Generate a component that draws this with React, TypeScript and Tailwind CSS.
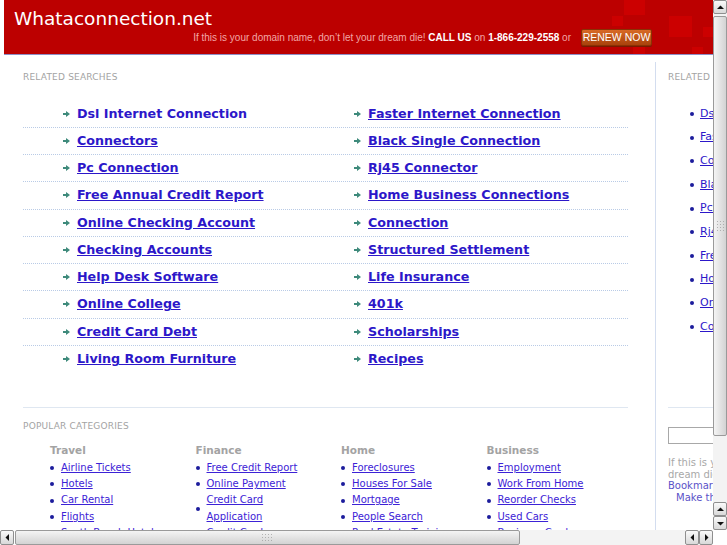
import React from "react";

const related: [string, string][] = [
  ["Dsl Internet Connection", "Faster Internet Connection"],
  ["Connectors", "Black Single Connection"],
  ["Pc Connection", "Rj45 Connector"],
  ["Free Annual Credit Report", "Home Business Connections"],
  ["Online Checking Account", "Connection"],
  ["Checking Accounts", "Structured Settlement"],
  ["Help Desk Software", "Life Insurance"],
  ["Online College", "401k"],
  ["Credit Card Debt", "Scholarships"],
  ["Living Room Furniture", "Recipes"],
];

const sideLinks = [
  "Dsl Internet Connection",
  "Faster Internet Connection",
  "Connectors",
  "Black Single Connection",
  "Pc Connection",
  "Rj45 Connector",
  "Free Annual Credit Report",
  "Home Business Connections",
  "Online Checking Account",
  "Connection",
];

const categories = [
  { title: "Travel", items: ["Airline Tickets", "Hotels", "Car Rental", "Flights", "South Beach Hotels"] },
  { title: "Finance", items: ["Free Credit Report", "Online Payment", "Credit Card Application", "Credit Cards"] },
  { title: "Home", items: ["Foreclosures", "Houses For Sale", "Mortgage", "People Search", "Real Estate Training"] },
  { title: "Business", items: ["Employment", "Work From Home", "Reorder Checks", "Used Cars", "Business Cards"] },
];

const Arrow = () => (
  <svg width="7" height="6" viewBox="0 0 7 6" className="shrink-0">
    <path d="M0 2h3V0l4 3-4 3V4H0z" fill="#3e8a7b" />
  </svg>
);

const Dot = () => <span className="w-[4px] h-[4px] rounded-full bg-[#1c1c9c] shrink-0" />;

const Grip = ({ vertical }: { vertical?: boolean }) => (
  <svg width={vertical ? 9 : 13} height={vertical ? 13 : 9} className="opacity-70">
    {Array.from({ length: 12 }).map((_, i) => {
      const a = i % 3;
      const b = Math.floor(i / 3);
      return vertical ? (
        <rect key={i} x={a * 3 + 1} y={b * 3 + 1} width="1" height="1" fill="#9a9a9a" />
      ) : (
        <rect key={i} x={b * 3 + 1} y={a * 3 + 1} width="1" height="1" fill="#9a9a9a" />
      );
    })}
  </svg>
);

const Btn = ({ dir }: { dir: "up" | "down" | "left" | "right" }) => {
  const d = {
    up: "M1 5h7L4.5 1.5z",
    down: "M1 2h7L4.5 5.5z",
    left: "M5 1v7L1.5 4.5z",
    right: "M2 1v7l3.5-3.5z",
  }[dir];
  const vert = dir === "up" || dir === "down";
  return (
    <div
      className={`flex items-center justify-center border border-[#8f8f8f] rounded-[2px] bg-gradient-to-b from-[#fafafa] to-[#d9d9d9] ${
        vert ? "w-[14px] h-[14px]" : "w-[14px] h-[15px]"
      }`}
    >
      <svg width={vert ? 9 : 7} height={vert ? 7 : 9}>
        <path d={d} fill="#111" />
      </svg>
    </div>
  );
};

const Header = () => (
  <div className="relative h-[55px] bg-[#bc0000] border-b border-[#8e8ec6] overflow-hidden flex flex-col pt-[8px]">
    <svg className="absolute left-0 top-0" width="709" height="54">
      <g fill="#cc0000">
        <rect x="620" y="0" width="21" height="15" />
        <rect x="608" y="16" width="11" height="10" />
        <rect x="665" y="16" width="23" height="21" />
        <rect x="699" y="27" width="10" height="10" />
        <rect x="629" y="47" width="12" height="7" />
        <rect x="688" y="47" width="11" height="7" />
      </g>
    </svg>
    <div className="relative pl-[10px] text-white text-[18.5px] leading-[22px] font-['DejaVu_Sans',sans-serif]">
      Whataconnection.net
    </div>
    <div className="relative flex items-center justify-end h-[17px] pr-[61px] -mt-px font-['Liberation_Sans',Arial,sans-serif] text-[10px]">
      <span className="text-[#f2a6a6]">
        If this is your domain name, don’t let your dream die! <b className="text-white">CALL US</b> on{" "}
        <b className="text-white">1-866-229-2558</b> or
      </span>
      <div className="ml-[10px] w-[71px] h-[17px] flex items-center justify-center rounded-[2px] border border-[#8a3104] bg-gradient-to-b from-[#d86a26] to-[#a9420c] text-white text-[10.5px] shadow-[0_1px_0_#7a1a00]">
        RENEW NOW
      </div>
    </div>
  </div>
);

const Main = () => (
  <div className="w-[605px] ml-[19px] shrink-0 font-['DejaVu_Sans',sans-serif]">
    <div className="pt-[17px] text-[9px] leading-[11px] text-[#a3a3a3] tracking-[0.2px]">RELATED SEARCHES</div>
    <div className="mt-[17.5px]">
      {related.map((r, i) => (
        <div
          key={i}
          className={`flex items-center h-[27.25px] ${i < 9 ? "border-b border-dotted border-[#b9cbe6]" : ""}`}
        >
          {r.map((t, j) => (
            <div key={j} className={`flex items-center gap-[7px] pl-[40px] ${j === 0 ? "w-[291px]" : "flex-1"}`}>
              <Arrow />
              <a
                className={`text-[12.7px] font-bold text-[#2c17c9] leading-[16px] ${
                  i === 0 && j === 0 ? "no-underline" : "underline"
                }`}
              >
                {t}
              </a>
            </div>
          ))}
        </div>
      ))}
    </div>
    <div className="mt-[34px] border-t border-[#dfe7f1]" />
    <div className="pt-[13px] text-[9px] leading-[11px] text-[#a3a3a3] tracking-[0.2px]">POPULAR CATEGORIES</div>
    <div className="grid grid-cols-[145.5px_145.5px_145.5px_145.5px] ml-[27px] mt-[12px]">
      {categories.map((c) => (
        <div key={c.title}>
          <div className="text-[10.5px] leading-[13px] font-bold text-[#a3a3a3]">{c.title}</div>
          <div className="mt-[2.5px]">
            {c.items.map((it) => (
              <div key={it} className="flex items-center gap-[7px]">
                <Dot />
                <a className="max-w-[106px] text-[10px] leading-[16.4px] text-[#3c22d6] underline">{it}</a>
              </div>
            ))}
          </div>
        </div>
      ))}
    </div>
  </div>
);

const Sidebar = () => (
  <div className="ml-[27px] mt-[7px] border-l border-[#d3ddef] pl-[12px] w-[260px] shrink-0 font-['DejaVu_Sans',sans-serif]">
    <div className="pt-[9.5px] text-[9px] leading-[11px] text-[#a3a3a3] tracking-[0.2px]">RELATED</div>
    <div className="mt-[19.5px]">
      {sideLinks.map((t) => (
        <div key={t} className="flex items-center gap-[6px] pl-[22px] h-[23.7px]">
          <Dot />
          <a className="text-[11px] text-[#2c17c9] underline">{t}</a>
        </div>
      ))}
    </div>
    <div className="mt-[68px] border-t border-[#dfe7f1]" />
    <div className="mt-[19px] h-[17px] w-[200px] border border-[#a8a8a8]" />
    <div className="mt-[13px] text-[10px] leading-[11.7px]">
      <div className="text-[#a8a8a8]">If this is your domain name, don't let your</div>
      <div className="text-[#a8a8a8]">dream die! Renew it today.</div>
      <div className="text-[#5b52c8]">Bookmark this page</div>
      <div className="pl-[8px] text-[#5b52c8]">Make this your homepage</div>
    </div>
  </div>
);

const Track = ({ vertical }: { vertical?: boolean }) => (
  <div
    className={`${vertical ? "w-[14px]" : "h-[15px]"} flex-1 bg-[#f3f3f3] bg-[radial-gradient(#d9d9d9_0.6px,transparent_0.7px)] bg-[length:2px_2px]`}
  />
);

export default function App() {
  return (
    <div className="w-[727px] h-[545px] flex flex-col overflow-hidden bg-white">
      <div className="flex flex-1 min-h-0">
        <div className="w-[713px] overflow-hidden pl-[4px]">
          <Header />
          <div className="flex">
            <Main />
            <Sidebar />
          </div>
        </div>
        <div className="w-[14px] flex flex-col bg-[#f3f3f3]">
          <Btn dir="up" />
          <div className="mt-[2px] h-[420px] border border-[#9a9a9a] rounded-[2px] bg-gradient-to-r from-[#f4f4f4] to-[#d3d3d3] flex items-center justify-center">
            <Grip vertical />
          </div>
          <Track vertical />
          <Btn dir="up" />
          <Btn dir="down" />
        </div>
      </div>
      <div className="h-[15px] flex">
        <Btn dir="left" />
        <div className="ml-px w-[505px] border border-[#9a9a9a] rounded-[2px] bg-gradient-to-b from-[#f4f4f4] to-[#d3d3d3] flex items-center justify-center">
          <Grip />
        </div>
        <Track />
        <Btn dir="left" />
        <Btn dir="right" />
        <div className="w-[14px] bg-white" />
      </div>
    </div>
  );
}
